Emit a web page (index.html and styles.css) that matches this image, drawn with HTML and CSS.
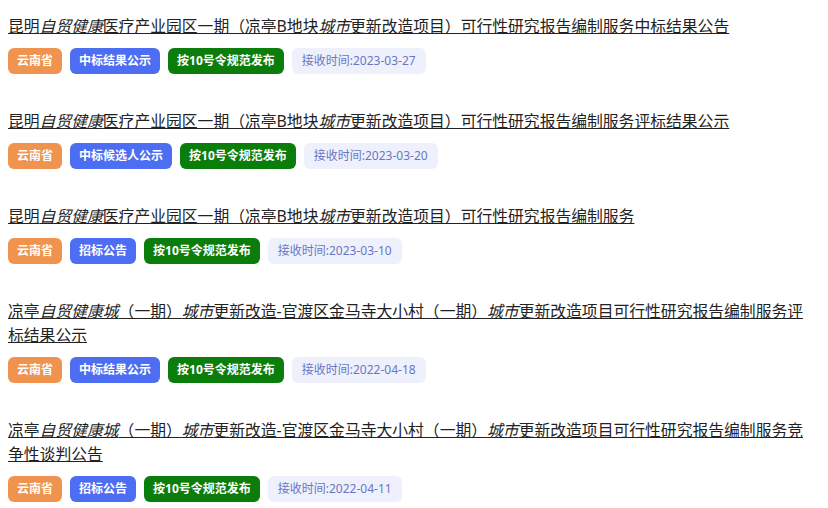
FILE: index.html
```html
<!DOCTYPE html>
<html lang="zh-CN">
<head>
    <meta charset="UTF-8">
    <title>招标公告列表</title>
    <link rel="stylesheet" href="styles.css">
</head>
<body>
    <div class="notice-list">
        <div class="notice">
            <a class="notice-title" href="#">昆明<em>自贸健康</em>医疗产业园区一期（凉亭B地块<em>城市</em>更新改造项目）可行性研究报告编制服务中标结果公告</a>
            <div class="tags">
                <span class="tag tag-region">云南省</span>
                <span class="tag tag-type">中标结果公示</span>
                <span class="tag tag-rule">按10号令规范发布</span>
                <span class="tag tag-date">接收时间:2023-03-27</span>
            </div>
        </div>
        <div class="notice">
            <a class="notice-title" href="#">昆明<em>自贸健康</em>医疗产业园区一期（凉亭B地块<em>城市</em>更新改造项目）可行性研究报告编制服务评标结果公示</a>
            <div class="tags">
                <span class="tag tag-region">云南省</span>
                <span class="tag tag-type">中标候选人公示</span>
                <span class="tag tag-rule">按10号令规范发布</span>
                <span class="tag tag-date">接收时间:2023-03-20</span>
            </div>
        </div>
        <div class="notice">
            <a class="notice-title" href="#">昆明<em>自贸健康</em>医疗产业园区一期（凉亭B地块<em>城市</em>更新改造项目）可行性研究报告编制服务</a>
            <div class="tags">
                <span class="tag tag-region">云南省</span>
                <span class="tag tag-type">招标公告</span>
                <span class="tag tag-rule">按10号令规范发布</span>
                <span class="tag tag-date">接收时间:2023-03-10</span>
            </div>
        </div>
        <div class="notice">
            <a class="notice-title" href="#">凉亭<em>自贸健康城</em>（一期）<em>城市</em>更新改造-官渡区金马寺大小村（一期）<em>城市</em>更新改造项目可行性研究报告编制服务评标结果公示</a>
            <div class="tags">
                <span class="tag tag-region">云南省</span>
                <span class="tag tag-type">中标结果公示</span>
                <span class="tag tag-rule">按10号令规范发布</span>
                <span class="tag tag-date">接收时间:2022-04-18</span>
            </div>
        </div>
        <div class="notice">
            <a class="notice-title" href="#">凉亭<em>自贸健康城</em>（一期）<em>城市</em>更新改造-官渡区金马寺大小村（一期）<em>城市</em>更新改造项目可行性研究报告编制服务竞争性谈判公告</a>
            <div class="tags">
                <span class="tag tag-region">云南省</span>
                <span class="tag tag-type">招标公告</span>
                <span class="tag tag-rule">按10号令规范发布</span>
                <span class="tag tag-date">接收时间:2022-04-11</span>
            </div>
        </div>
    </div>
</body>
</html>
```

FILE: styles.css
```css
body {
    margin: 0;
    padding: 14px 8px 0;
    background-color: #fff;
    color: #222;
    font-family: "Noto Sans", "Noto Sans CJK SC", sans-serif;
}
.notice {
    margin-bottom: 35px;
}
.notice-title {
    display: block;
    max-width: 798px;
    font-size: 15.8px;
    line-height: 24px;
    color: #222;
    text-decoration: underline;
}
.notice-title em {
    font-style: italic;
}
.tags {
    display: flex;
    gap: 8px;
    margin-top: 10px;
}
.tag {
    height: 26px;
    line-height: 26px;
    padding: 0 9px;
    border-radius: 6px;
    font-size: 12px;
    font-weight: bold;
    color: #fff;
}
.tag-region {
    background-color: #f0934e;
}
.tag-type {
    background-color: #4d6ef2;
}
.tag-rule {
    background-color: #0b7d0b;
}
.tag-date {
    background-color: #eef1fc;
    color: #6a76c4;
    font-weight: normal;
    padding: 0 10px;
}
```
